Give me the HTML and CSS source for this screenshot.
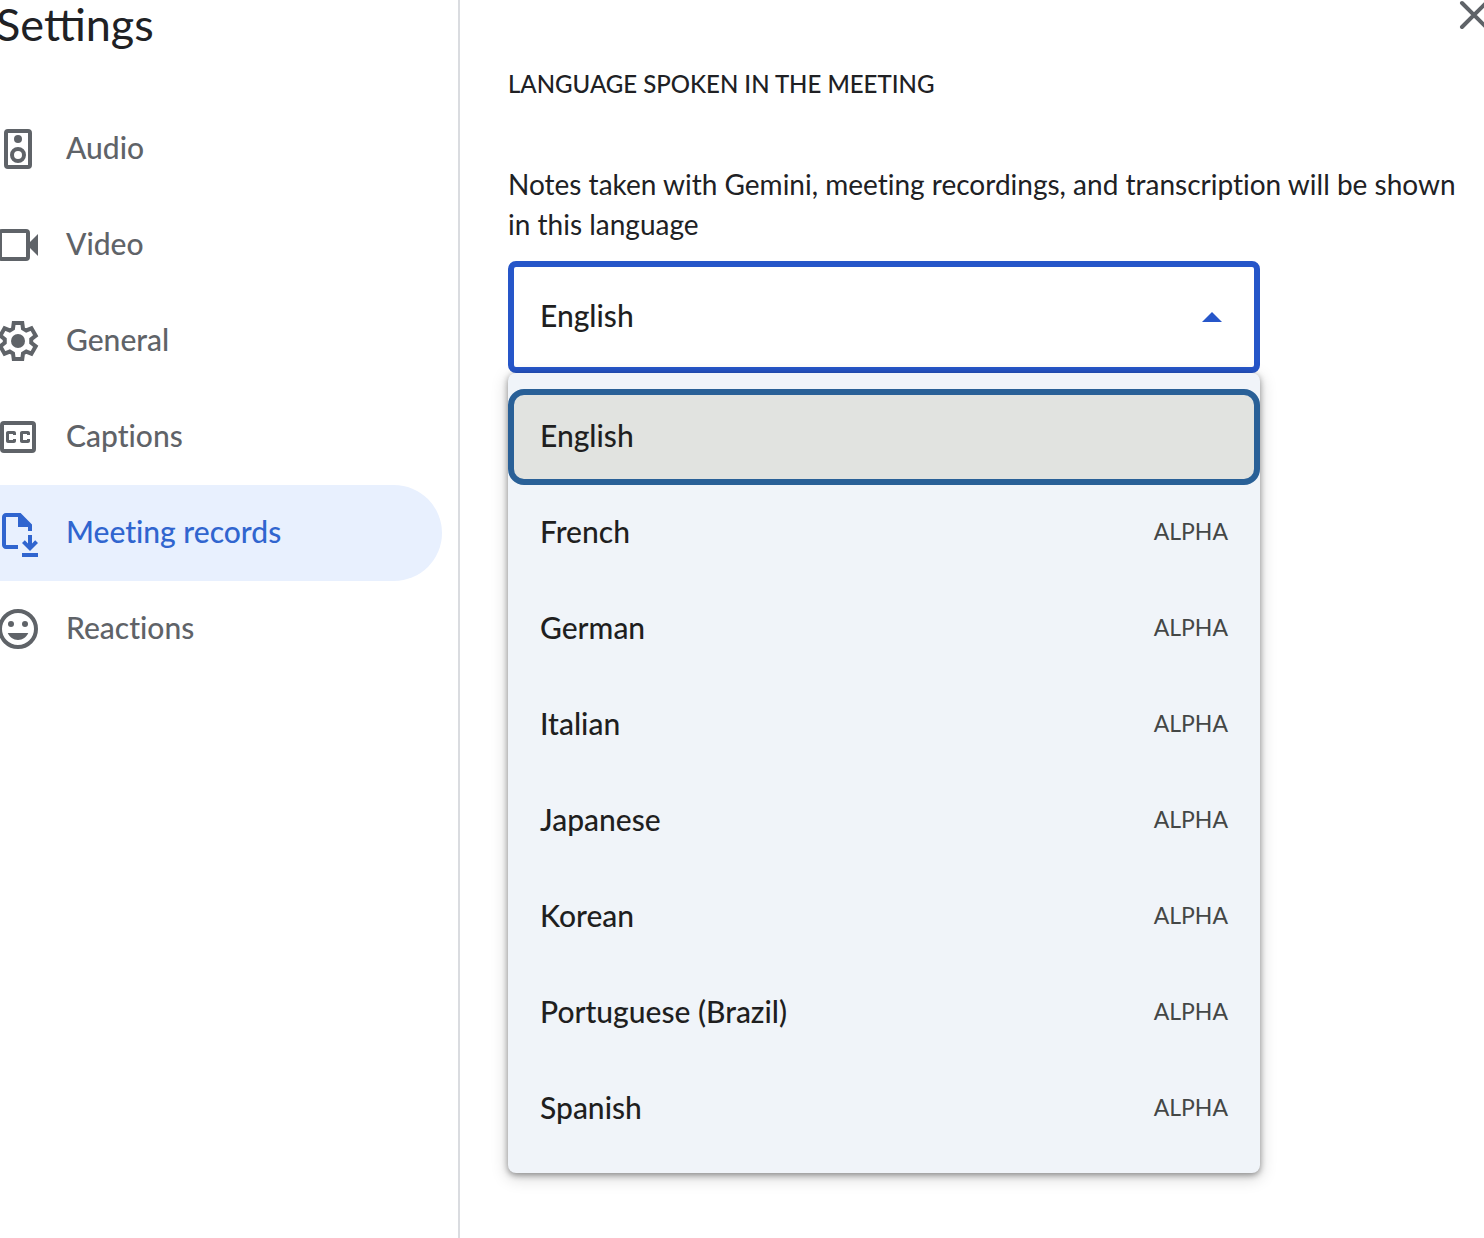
FILE: index.html
```html
<!DOCTYPE html>
<html lang="en">
<head>
    <meta charset="UTF-8">
    <title>Settings</title>
    <link rel="stylesheet" href="styles.css">
</head>
<body>
<div class="settings">
    <aside class="sidebar">
        <h1 class="title">Settings</h1>
        <nav class="nav">
            <a class="nav-item" href="#">
                <svg class="icon" viewBox="0 0 24 24"><rect class="line" x="6" y="3" width="12" height="18" rx="1"/><circle cx="12" cy="7" r="2"/><circle class="line" cx="12" cy="15" r="3"/></svg>
                <span>Audio</span>
            </a>
            <a class="nav-item" href="#">
                <svg class="icon" viewBox="0 0 24 24"><rect class="line" x="3" y="5" width="14" height="14" rx="1"/><path d="M18 10.5l4-4v11l-4-4z"/></svg>
                <span>Video</span>
            </a>
            <a class="nav-item" href="#">
                <svg class="icon" viewBox="0 0 24 24"><path class="line" d="M9.5 5.8L9.87 3H14.13L14.5 5.8L16.12 6.73L18.73 5.66L20.86 9.34L18.62 11.07V12.93L20.86 14.66L18.73 18.34L16.12 17.27L14.5 18.2L14.13 21H9.87L9.5 18.2L7.88 17.27L5.27 18.34L3.14 14.66L5.38 12.93V11.07L3.14 9.34L5.27 5.66L7.88 6.73z"/><circle cx="12" cy="12" r="3.5"/></svg>
                <span>General</span>
            </a>
            <a class="nav-item" href="#">
                <svg class="icon" viewBox="0 0 24 24"><rect class="line" x="4" y="5" width="16" height="14" rx="1"/><path d="M11 11H9.5v-.5h-2v3h2V13H11v1c0 .55-.45 1-1 1H7c-.55 0-1-.45-1-1v-4c0-.55.45-1 1-1h3c.55 0 1 .45 1 1v1zm7 0h-1.5v-.5h-2v3h2V13H18v1c0 .55-.45 1-1 1h-3c-.55 0-1-.45-1-1v-4c0-.55.45-1 1-1h3c.55 0 1 .45 1 1v1z"/></svg>
                <span>Captions</span>
            </a>
            <a class="nav-item active" href="#">
                <svg class="icon" viewBox="0 0 24 24"><path d="M13.3 2H6C4.9 2 4 2.9 4 4v14c0 1.1.9 2 2 2h6v-2H6V4h6v5h5v2h2V7.7z"/><path d="M17 13h2v4.2l1.6-1.6L22 17l-4 4-4-4 1.4-1.4 1.6 1.6zM14 22h8v2h-8z"/></svg>
                <span>Meeting records</span>
            </a>
            <a class="nav-item" href="#">
                <svg class="icon" viewBox="0 0 24 24"><circle class="line" cx="12" cy="12" r="9"/><circle cx="8.5" cy="9.5" r="1.5"/><circle cx="15.5" cy="9.5" r="1.5"/><path d="M12 17.5c2.33 0 4.31-1.46 5.11-3.5H6.89c.8 2.04 2.78 3.5 5.11 3.5z"/></svg>
                <span>Reactions</span>
            </a>
        </nav>
    </aside>
    <main class="content">
        <button class="close" type="button" aria-label="Close">
            <svg class="icon" viewBox="0 0 24 24"><path class="line round" d="M6 6l12 12M18 6L6 18"/></svg>
        </button>
        <h2 class="heading">LANGUAGE SPOKEN IN THE MEETING</h2>
        <label class="hint" for="language">Notes taken with Gemini, meeting recordings, and transcription will be shown in this language</label>
        <div class="dropdown">
            <select class="select" id="language">
                <option>English</option>
                <option>French</option>
                <option>German</option>
                <option>Italian</option>
                <option>Japanese</option>
                <option>Korean</option>
                <option>Portuguese (Brazil)</option>
                <option>Spanish</option>
            </select>
            <svg class="arrow" viewBox="0 0 20 10"><path d="M0 10L10 0l10 10z"/></svg>
            <div class="menu" role="listbox" aria-label="Language">
                <button class="option selected" type="button" role="option" aria-selected="true">English</button>
                <button class="option" type="button" role="option">French <span class="tag">ALPHA</span></button>
                <button class="option" type="button" role="option">German <span class="tag">ALPHA</span></button>
                <button class="option" type="button" role="option">Italian <span class="tag">ALPHA</span></button>
                <button class="option" type="button" role="option">Japanese <span class="tag">ALPHA</span></button>
                <button class="option" type="button" role="option">Korean <span class="tag">ALPHA</span></button>
                <button class="option" type="button" role="option">Portuguese (Brazil) <span class="tag">ALPHA</span></button>
                <button class="option" type="button" role="option">Spanish <span class="tag">ALPHA</span></button>
            </div>
        </div>
    </main>
</div>
</body>
</html>
```
FILE: styles.css
```css
*{
    margin: 0;
    padding: 0;
    box-sizing: border-box;
}
body{
    font-family: Lato, "Open Sans", sans-serif;
    font-size: 28px;
    font-variant-ligatures: none;
    color: #202124;
    background: #fff;
}
button, select{
    font: inherit;
    color: inherit;
    border: none;
    background: none;
    cursor: pointer;
}
.settings{
    display: flex;
    min-height: 100vh;
    position: relative;
    overflow: hidden;
}
/* sidebar */
.sidebar{
    flex: 0 0 460px;
    padding-right: 16px;
    border-right: 2px solid #dadce0;
}
.title{
    height: 101px;
    margin-left: -4px;
    font-size: 45px;
    font-weight: 400;
    font-variant-ligatures: normal;
    line-height: 48px;
}
.nav-item{
    display: flex;
    align-items: center;
    gap: 24px;
    height: 96px;
    margin-left: -6px;
    border-radius: 0 48px 48px 0;
    font-size: 30px;
    font-weight: 500;
    color: #5f6368;
    text-decoration: none;
}
.nav-item span{
    padding-bottom: 4px;
}
.nav-item.active{
    background: #e8f0fe;
    color: #3065cf;
}
.icon{
    display: block;
    width: 48px;
    height: 48px;
    fill: currentColor;
}
.line{
    fill: none;
    stroke: currentColor;
    stroke-width: 2;
}
.round{
    stroke-linecap: round;
}
/* content */
.content{
    flex: 1;
    min-width: 0;
    padding: 64px 0 64px 48px;
}
.close{
    position: absolute;
    top: -9px;
    right: -14px;
    color: #5f6368;
}
.heading{
    margin-bottom: 60px;
    font-size: 24px;
    font-weight: 500;
    line-height: 40px;
}
.hint{
    display: block;
    margin-bottom: 17px;
    line-height: 40px;
}
.dropdown{
    position: relative;
    max-width: 752px;
    color: #1f1f1f;
    font-size: 30px;
    font-weight: 500;
}
.select{
    display: block;
    width: 100%;
    height: 112px;
    padding: 0 26px 4px;
    border: 6px solid #2656c9;
    border-radius: 8px;
    background: #fff;
    appearance: none;
    outline: none;
}
.arrow{
    position: absolute;
    top: 51px;
    right: 38px;
    width: 20px;
    height: 10px;
    fill: #2656c9;
    pointer-events: none;
}
.menu{
    position: absolute;
    top: 100%;
    left: 0;
    width: 100%;
    padding: 16px 0;
    border-radius: 8px;
    background: #f0f4f9;
    box-shadow: 0 2px 6px rgba(0,0,0,0.4), 0 4px 16px 2px rgba(0,0,0,0.15);
}
.option{
    display: flex;
    align-items: center;
    justify-content: space-between;
    width: 100%;
    height: 96px;
    padding: 0 32px 4px;
    text-align: left;
}
.option.selected{
    padding: 0 26px 4px;
    border: 6px solid #296097;
    border-radius: 16px;
    background: #e1e3e0;
}
.tag{
    font-size: 23px;
    font-weight: 400;
    color: #444746;
}
```
